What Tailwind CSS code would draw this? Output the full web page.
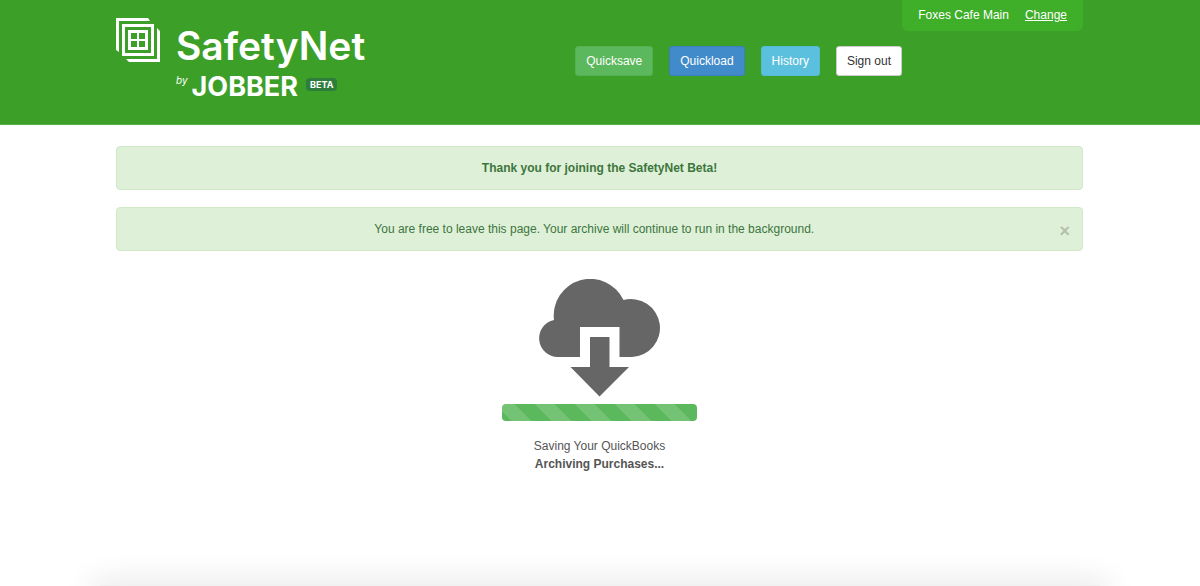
<!DOCTYPE html>
<html lang="en">
<head>
<meta charset="utf-8">
<meta name="viewport" content="width=device-width, initial-scale=1">
<title>SafetyNet by Jobber</title>
<script src="https://cdn.jsdelivr.net/npm/@tailwindcss/browser@4"></script>
</head>
<body class="flex min-h-screen flex-col overflow-x-hidden bg-white font-['Liberation_Sans',Arial,sans-serif] text-xs leading-[18px] text-[#555]">
<header class="border-b border-[#56ad45] bg-[#3c9f28] pr-px text-white">
  <div class="relative mx-auto flex h-31 max-w-[967px] items-start justify-between">
    <a href="#" class="flex items-start gap-4 pt-[18px]">
      <svg class="size-11" viewBox="0 0 44 44" fill="#fff" aria-hidden="true">
        <path d="M0 0H32L34 3H3V34L0 32Z"/>
        <path d="M41 10L44 13V44H13L10 41H41Z"/>
        <path fill-rule="evenodd" d="M6 6H38V38H6ZM9 9V35H35V9Z"/>
        <path fill-rule="evenodd" d="M12 12H32V32H12ZM15 15V21H21V15ZM23 15V21H29V15ZM15 23V29H21V23ZM23 23V29H29V23Z"/>
      </svg>
      <span class="flex flex-col font-[Inter,sans-serif]">
        <span class="pt-2 text-[39px] leading-10 font-semibold">SafetyNet</span>
        <span class="flex items-start">
          <span class="pt-2 text-[10px] leading-3 italic">by</span>
          <span class="pt-[5px] pl-1 text-[27px] leading-8 font-bold">JOBBER</span>
          <span class="mt-3 ml-2 rounded bg-[#2f7d3d] px-1 text-[9px] leading-[13px] font-bold">BETA</span>
        </span>
      </span>
    </a>
    <nav class="mr-[181px] flex gap-4 pt-[46px] leading-[18px] font-medium">
      <button class="rounded-[3px] border border-[#55b052] bg-[#5cb85c] px-2.5 py-[5px]">Quicksave</button>
      <button class="rounded-[3px] border border-[#3a80bd] bg-[#428bca] px-2.5 py-[5px]">Quickload</button>
      <button class="rounded-[3px] border border-[#55bcd8] bg-[#5bc0de] px-2.5 py-[5px]">History</button>
      <button class="rounded-[3px] border border-[#ccc] bg-white px-2.5 py-[5px] text-[#333]">Sign out</button>
    </nav>
    <div class="absolute top-0 right-0 flex gap-4 rounded-b-md bg-[#3fae29] px-4 pt-1.5 pb-[7px]">
      <span>Foxes Cafe Main</span><a href="#" class="underline">Change</a>
    </div>
  </div>
</header>
<main class="flex-1 pt-[21px] pr-px">
  <div class="mx-auto flex max-w-[967px] flex-col items-center">
    <div role="alert" class="w-full rounded border border-[#d0e9c6] bg-[#dff0d8] py-3 text-center font-bold text-[#3c763d]">Thank you for joining the SafetyNet Beta!</div>
    <div role="alert" class="mt-[17px] flex w-full items-center rounded border border-[#d0e9c6] bg-[#dff0d8] p-3 text-[#3c763d]">
      <span class="flex-1 text-center">You are free to leave this page. Your archive will continue to run in the background.</span>
      <button aria-label="Close" class="pt-1 text-lg leading-[14px] font-bold text-[#b2c0ad]">×</button>
    </div>
    <svg class="mt-7 h-[118px] w-[122px]" viewBox="0 0 122 118" fill="#666" aria-hidden="true">
      <path d="M19 78A18.7 18.7 0 0 1 15 41A36.600 36.600 0 0 1 84.500 21A29 29 0 1 1 93 78H80.500V48H41V78Z"/>
      <path d="M51 58H70.500V88H90L60.500 117.500L31.500 88H51Z"/>
    </svg>
    <div role="progressbar" aria-label="Saving" class="mt-[7px] h-[17px] w-[195px] rounded bg-[#5cb85c] bg-[linear-gradient(45deg,#ffffff26_25%,transparent_25%,transparent_50%,#ffffff26_50%,#ffffff26_75%,transparent_75%,transparent)] bg-size-[40px_40px] bg-position-[-7px_0]"></div>
    <div class="mt-4 text-center"><p>Saving Your QuickBooks</p><p class="font-bold">Archiving Purchases...</p></div>
  </div>
</main>
<footer class="w-full px-[100px]"><div class="h-px bg-[#f0f0f0] shadow-[0_5px_30px_8px_#00000020]"></div></footer>
</body>
</html>
